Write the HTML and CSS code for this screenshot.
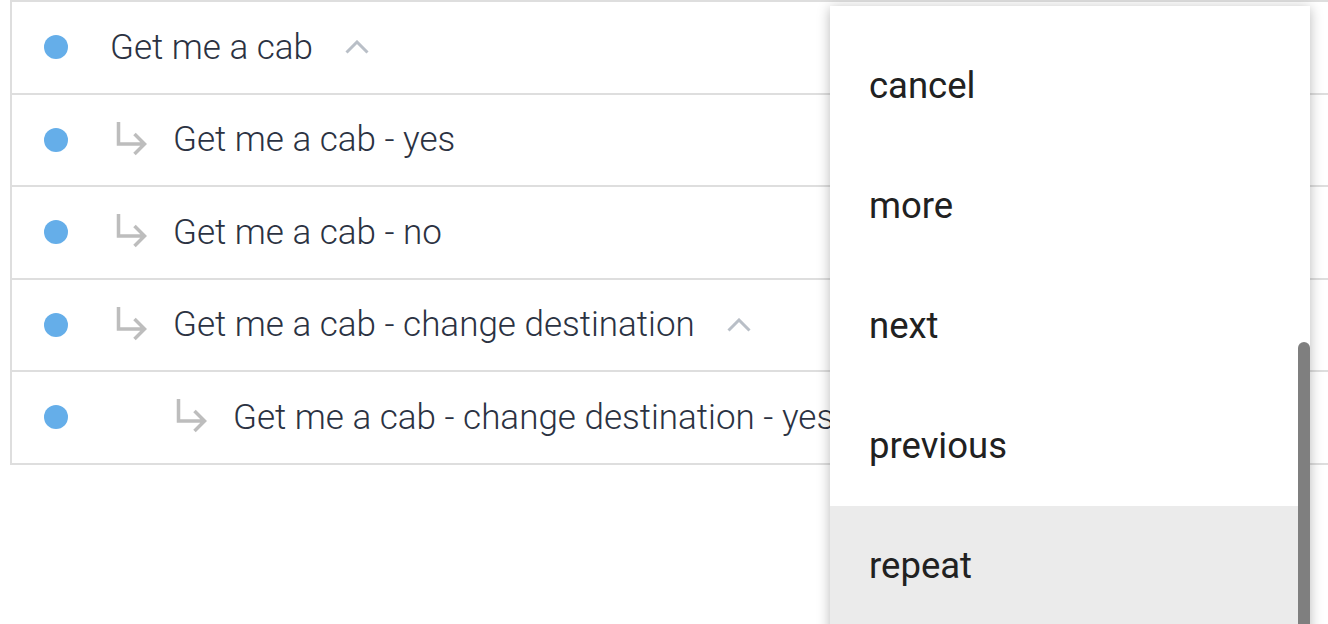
FILE: index.html
```html
<!DOCTYPE html>
<html>
<head>
    <meta charset="utf-8">
    <title>Intents</title>
    <link rel="stylesheet" href="styles.css">
</head>
<body>
    <div class="intent-list">
        <div class="intent-row">
            <span class="dot"></span>
            <span class="intent-name">Get me a cab</span>
            <svg class="chevron" width="24" height="14" viewBox="0 0 24 14"><polyline points="1.5,12.5 12,2 22.5,12.5"/></svg>
        </div>
        <div class="intent-row">
            <span class="dot"></span>
            <svg class="sub-arrow" width="32" height="36" viewBox="0 0 32 36"><path d="M2.5 0 V22 H28 M18.5 12 L28.5 22 L18.5 32"/></svg>
            <span class="intent-name">Get me a cab - yes</span>
        </div>
        <div class="intent-row">
            <span class="dot"></span>
            <svg class="sub-arrow" width="32" height="36" viewBox="0 0 32 36"><path d="M2.5 0 V22 H28 M18.5 12 L28.5 22 L18.5 32"/></svg>
            <span class="intent-name">Get me a cab - no</span>
        </div>
        <div class="intent-row">
            <span class="dot"></span>
            <svg class="sub-arrow" width="32" height="36" viewBox="0 0 32 36"><path d="M2.5 0 V22 H28 M18.5 12 L28.5 22 L18.5 32"/></svg>
            <span class="intent-name">Get me a cab - change destination</span>
            <svg class="chevron" width="24" height="14" viewBox="0 0 24 14"><polyline points="1.5,12.5 12,2 22.5,12.5"/></svg>
        </div>
        <div class="intent-row">
            <span class="dot"></span>
            <svg class="sub-arrow level-2" width="32" height="36" viewBox="0 0 32 36"><path d="M2.5 0 V22 H28 M18.5 12 L28.5 22 L18.5 32"/></svg>
            <span class="intent-name">Get me a cab - change destination - yes</span>
        </div>
    </div>

    <div class="menu">
        <div class="menu-item">cancel</div>
        <div class="menu-item">more</div>
        <div class="menu-item">next</div>
        <div class="menu-item">previous</div>
        <div class="menu-item active">repeat</div>
        <div class="scroll-thumb"></div>
    </div>
</body>
</html>
```

FILE: styles.css
```css
html,
body {
    margin: 0;
    padding: 0;
    height: 100%;
    overflow: hidden;
    background: #fff;
    font-family: Roboto, "Liberation Sans", sans-serif;
}

.intent-list {
    margin-left: 10px;
    border-left: 2px solid #dedede;
    border-top: 2px solid #dedede;
}

.intent-row {
    display: flex;
    align-items: center;
    height: 90.5px;
    border-bottom: 2px solid #dedede;
    white-space: nowrap;
}

.dot {
    flex: none;
    width: 24px;
    height: 24px;
    border-radius: 50%;
    background: #65aee9;
    margin: 0 42px 0 32px;
}

.intent-name {
    font-size: 35px;
    font-weight: 300;
    color: #2b3242;
}

.chevron {
    flex: none;
    margin-left: 32px;
    fill: none;
    stroke: #b9bfc7;
    stroke-width: 3;
}

.sub-arrow {
    flex: none;
    margin: 0 25px 0 6px;
    fill: none;
    stroke: #bdbdbd;
    stroke-width: 3.5;
}

.sub-arrow.level-2 {
    margin-left: 66px;
}

/* dropdown */
.menu {
    position: absolute;
    left: 830px;
    top: 6px;
    width: 480px;
    height: 760px;
    padding-top: 20px;
    background: #fff;
    box-shadow: 0 2px 12px rgba(0, 0, 0, 0.28);
    overflow: hidden;
}

.menu-item {
    height: 120px;
    line-height: 120px;
    padding: 0 39px;
    font-size: 36.5px;
    color: #212121;
}

.menu-item.active {
    background: #ebebeb;
}

.scroll-thumb {
    position: absolute;
    right: 0;
    top: 336px;
    width: 12px;
    height: 420px;
    border-radius: 6px;
    background: #7f7f7f;
}
```
